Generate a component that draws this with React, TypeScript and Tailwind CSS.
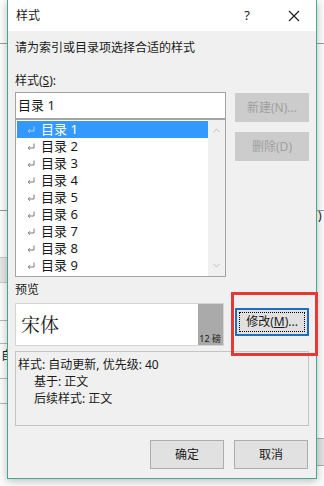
import { ChevronUp, ChevronDown } from "lucide-react"

const items = ["目录 1", "目录 2", "目录 3", "目录 4", "目录 5", "目录 6", "目录 7", "目录 8", "目录 9"]

function Btn({ label, disabled }: { label: React.ReactNode; disabled?: boolean }) {
  return (
    <div
      className={
        disabled
          ? "w-[74px] h-[29px] flex items-center justify-center bg-[#cccccc] border border-[#cccccc] text-[#9f9f9f] text-[12px]"
          : "w-[74px] h-[29px] flex items-center justify-center bg-[#e1e1e1] border border-[#adadad] text-[#1a1a1a] text-[12px]"
      }
    >
      {label}
    </div>
  )
}

// paragraph mark drawn before each style name
function ReturnMark({ color }: { color: string }) {
  return (
    <svg width="8" height="8" viewBox="0 0 8 8" className="ml-[10px] mr-[6px]">
      <path d="M7 0.5V5H1.2M3 3.2L1.2 5L3 6.8" fill="none" stroke={color} strokeWidth="1" />
    </svg>
  )
}

export default function App() {
  return (
    <div className="relative w-[324px] h-[486px] overflow-hidden bg-[#fbfbfb] font-['Noto_Sans','Noto_Sans_CJK_SC',sans-serif] text-[12px] text-[#1a1a1a]">
      {/* document behind the dialog */}
      <div className="absolute left-0 top-[43px] w-[324px] h-px bg-[#9a9a9a]" />
      <div className="absolute left-0 top-[210px] w-[324px] h-px bg-[#9a9a9a]" />
      <div className="absolute left-0 top-[320px] w-[8px] h-px bg-[#b5b5b5]" />
      <div className="absolute left-0 top-[343px] w-[8px] h-px bg-[#b5b5b5]" />
      <div className="absolute left-0 top-[378px] w-[8px] h-px bg-[#b5b5b5]" />
      <div className="absolute left-0 top-[403px] w-[8px] h-px bg-[#b5b5b5]" />
      <div className="absolute left-0 top-[257px] w-[7px] h-[26px] bg-[#e6e6e6] border-y border-[#c8c8c8]" />
      <div className="absolute left-[316px] top-[438px] w-[8px] h-[28px] bg-[#e1e1e1] border-y border-[#adadad]" />
      <div className="absolute left-[1px] top-[350px] text-[12px] leading-none">自</div>
      <div className="absolute left-[318px] top-[210px] text-[12px] leading-none">)</div>

      {/* dialog */}
      <div className="absolute left-[7px] top-0 w-[310px] h-[479px] flex flex-col bg-[#f0f0f0] border-x border-b border-[#41a98f] shadow-[0_2px_8px_rgba(0,0,0,0.25)]">
        <div className="h-[31px] shrink-0 bg-white flex items-center pl-[8px] pr-[14px]">
          <span className="flex-1">样式</span>
          <span className="text-[13px] mr-[38px]">?</span>
          <svg width="12" height="12" viewBox="0 0 12 12" className="mr-[2px]">
            <path d="M1 1L11 11M11 1L1 11" stroke="#1a1a1a" strokeWidth="1.1" />
          </svg>
        </div>

        <div className="flex flex-col px-[7px]">
          <div className="mt-[9px] leading-[16px]">请为索引或目录项选择合适的样式</div>
          <div className="mt-[17px] leading-[16px]">
            样式(<span className="underline">S</span>):
          </div>

          <div className="mt-[3px] flex gap-[9px]">
            <div className="w-[211px] flex flex-col">
              <div className="h-[27px] bg-white border border-[#a3a3a3] flex items-center pl-[2px] text-[13px]">
                目录 1
              </div>
              <div className="h-[158px] bg-white border border-[#a3a3a3] flex">
                <div className="flex-1 pt-px pl-px">
                  {items.map((t, i) => (
                    <div
                      key={t}
                      className={
                        i === 0
                          ? "h-[17px] flex items-center bg-[#3399ff] text-white"
                          : "h-[17px] flex items-center"
                      }
                    >
                      <ReturnMark color={i === 0 ? "#a9cff7" : "#7a7a7a"} />
                      <span className="text-[13px] leading-none">{t}</span>
                    </div>
                  ))}
                </div>
                <div className="w-[17px] bg-[#f0f0f0] flex flex-col items-center justify-between py-[5px]">
                  <ChevronUp size={11} strokeWidth={1.5} color="#a3a3a3" />
                  <ChevronDown size={11} strokeWidth={1.5} color="#a3a3a3" />
                </div>
              </div>
            </div>
            <div className="flex flex-col gap-[10px] pt-px">
              <Btn disabled label="新建(N)..." />
              <Btn disabled label="删除(D)" />
            </div>
          </div>

          <div className="mt-[5px] leading-[16px]">预览</div>

          <div className="mt-[5px] flex items-start">
            <div className="w-[209px] h-[43px] bg-white border border-[#d4d4d4] flex">
              <div className="flex-1 flex items-center pl-[5px] text-[19px] font-['Noto_Serif_CJK_SC','Noto_Sans_CJK_SC',serif]">
                宋体
              </div>
              <div className="w-[25px] bg-[#aaaaaa] flex items-end justify-end pr-[2px] pb-[2px] text-[9px] leading-none text-[#1a1a1a]">
                12 磅
              </div>
            </div>
            <div className="relative ml-[11px] mt-[5px] w-[74px] h-[28px] flex items-center justify-center bg-[#e1e1e1] border-2 border-[#1c6fb8]">
              <div className="absolute inset-[2px] border border-dotted border-black" />
              <span>
                修改(<span className="underline">M</span>)...
              </span>
            </div>
          </div>

          <div className="mt-[5px] h-[75px] border border-[#c4c4c4] flex flex-col pl-[2px] pt-[4px] leading-[17px]">
            <div>样式: 自动更新, 优先级: 40</div>
            <div className="pl-[16px]">基于: 正文</div>
            <div className="pl-[16px]">后续样式: 正文</div>
          </div>

          <div className="mt-[14px] flex justify-end gap-[10px] pr-[1px]">
            <Btn label="确定" />
            <Btn label="取消" />
          </div>
        </div>
      </div>

      {/* annotation */}
      <div className="absolute left-[231px] top-[292px] w-[87px] h-[64px] border-[3px] border-[#e53935]" />
    </div>
  )
}
